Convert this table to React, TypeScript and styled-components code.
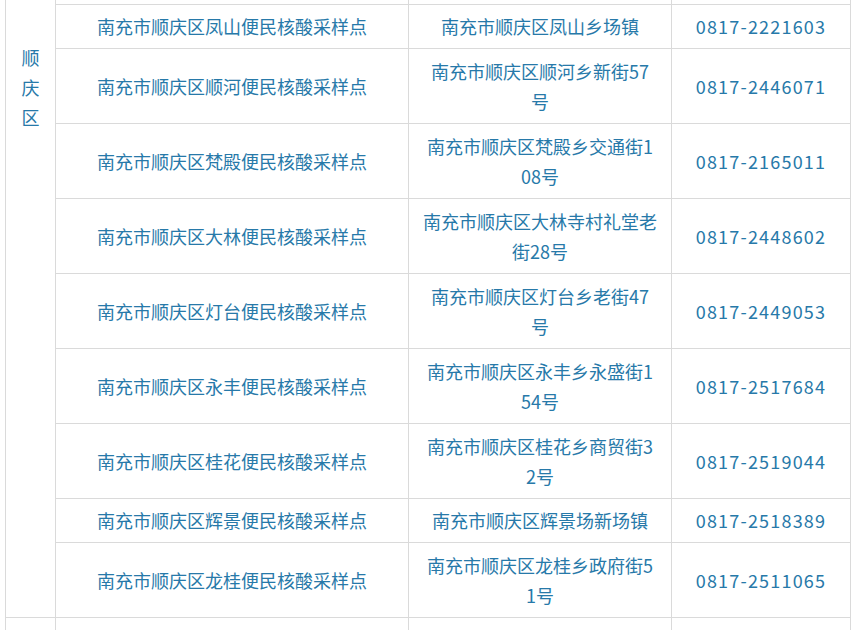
import styled, { createGlobalStyle } from "styled-components";

const GlobalStyle = createGlobalStyle`
  html, body {
    margin: 0;
    padding: 0;
    background: #fff;
  }
  body {
    font-family: "Noto Sans CJK SC", "Noto Sans", sans-serif;
    color: #2779a9;
  }
`;

const sites = [
  { name: "南充市顺庆区凤山便民核酸采样点", addr: ["南充市顺庆区凤山乡场镇"], tel: "0817-2221603" },
  { name: "南充市顺庆区顺河便民核酸采样点", addr: ["南充市顺庆区顺河乡新街57", "号"], tel: "0817-2446071" },
  { name: "南充市顺庆区梵殿便民核酸采样点", addr: ["南充市顺庆区梵殿乡交通街1", "08号"], tel: "0817-2165011" },
  { name: "南充市顺庆区大林便民核酸采样点", addr: ["南充市顺庆区大林寺村礼堂老", "街28号"], tel: "0817-2448602" },
  { name: "南充市顺庆区灯台便民核酸采样点", addr: ["南充市顺庆区灯台乡老街47", "号"], tel: "0817-2449053" },
  { name: "南充市顺庆区永丰便民核酸采样点", addr: ["南充市顺庆区永丰乡永盛街1", "54号"], tel: "0817-2517684" },
  { name: "南充市顺庆区桂花便民核酸采样点", addr: ["南充市顺庆区桂花乡商贸街3", "2号"], tel: "0817-2519044" },
  { name: "南充市顺庆区辉景便民核酸采样点", addr: ["南充市顺庆区辉景场新场镇"], tel: "0817-2518389" },
  { name: "南充市顺庆区龙桂便民核酸采样点", addr: ["南充市顺庆区龙桂乡政府街5", "1号"], tel: "0817-2511065" },
];

const Page = styled.div`
  height: 630px;
  overflow: hidden;
  padding-left: 5px;
`;

const Table = styled.table`
  width: 846px;
  table-layout: fixed;
  border-collapse: collapse;
  font-size: 18px;
  line-height: 30px;
`;

const Row = styled.tr<{ $h: number }>`
  height: ${(p) => p.$h}px;
`;

const Cell = styled.td<{ $open?: boolean }>`
  border: 1px solid #dadada;
  ${(p) => (p.$open ? "border-top: 0;" : "")}
  padding: 0 8px;
  text-align: center;
  vertical-align: middle;
`;

const District = styled(Cell)`
  vertical-align: top;
  padding: 42px 9px 0;
  border-top: 0;
`;

const Tel = styled.span`
  letter-spacing: 1.2px;
`;

export default function App() {
  return (
    <>
      <GlobalStyle />
      <Page>
        <Table>
          <colgroup>
            <col style={{ width: 50 }} />
            <col style={{ width: 353 }} />
            <col style={{ width: 263 }} />
            <col />
          </colgroup>
          <tbody>
            <Row $h={4}>
              <District rowSpan={sites.length + 1}>顺庆区</District>
              <Cell $open />
              <Cell $open />
              <Cell $open />
            </Row>
            {sites.map((s) => (
              <Row key={s.name} $h={s.addr.length > 1 ? 75 : 44}>
                <Cell>{s.name}</Cell>
                <Cell>
                  {s.addr.map((line, i) => (
                    <span key={i}>
                      {i > 0 && <br />}
                      {line}
                    </span>
                  ))}
                </Cell>
                <Cell>
                  <Tel>{s.tel}</Tel>
                </Cell>
              </Row>
            ))}
            <Row $h={44}>
              <Cell />
              <Cell />
              <Cell />
              <Cell />
            </Row>
          </tbody>
        </Table>
      </Page>
    </>
  );
}
